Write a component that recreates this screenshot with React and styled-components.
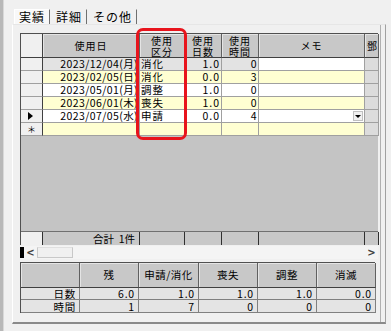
import React from "react"
import styled, { createGlobalStyle } from "styled-components"

const GlobalStyle = createGlobalStyle`
  html, body { margin: 0; padding: 0; background: #f0f0f0; }
  body { font-family: "Noto Sans CJK JP", "Liberation Sans", sans-serif; font-size: 11px; color: #000; }
`

const rows = [
  { date: "2023/12/04(月)", kind: "消化", days: "1.0", hours: "0", tone: "gray" },
  { date: "2023/02/05(日)", kind: "消化", days: "0.0", hours: "3", tone: "yellow" },
  { date: "2023/05/01(月)", kind: "調整", days: "1.0", hours: "0", tone: "white" },
  { date: "2023/06/01(木)", kind: "喪失", days: "1.0", hours: "0", tone: "yellow" },
  { date: "2023/07/05(水)", kind: "申請", days: "0.0", hours: "4", tone: "white", current: true },
]

const summaryHead = ["", "残", "申請/消化", "喪失", "調整", "消滅"]
const summaryRows = [
  ["日数", "6.0", "1.0", "1.0", "1.0", "0.0"],
  ["時間", "1", "7", "0", "0", "0"],
]

const COLS = "22px 97px 45px 37px 37px 106px 14px"
const tones = { gray: "#e3e3e3", yellow: "#ffffd2", white: "#ffffff" }

function App() {
  return (
    <Screen>
      <GlobalStyle />
      <WindowEdge />
      <Body>
        <TabBar>
          <Tab $active>実績</Tab>
          <Tab>詳細</Tab>
          <Tab>その他</Tab>
        </TabBar>
        <Panel>
          <GridFrame>
            <GridRow $height={24}>
              <Corner />
              <HeadCell>使用日</HeadCell>
              <HeadCell>使用<br />区分</HeadCell>
              <HeadCell>使用<br />日数</HeadCell>
              <HeadCell>使用<br />時間</HeadCell>
              <HeadCell>メモ</HeadCell>
              <HeadCell $clip>鄧</HeadCell>
            </GridRow>
            {rows.map((r, i) => (
              <GridRow key={i} $height={13}>
                <RowHead>{r.current ? <Pointer /> : null}</RowHead>
                <Cell $bg={tones[r.tone]} $align="flex-end">{r.date}</Cell>
                <Cell $bg={tones[r.tone]} $spread>{r.kind}</Cell>
                <Cell $bg={tones[r.tone]} $align="flex-end" $spread>{r.days}</Cell>
                <Cell $bg={tones[r.tone]} $align="flex-end">{r.hours}</Cell>
                <Cell $bg={r.tone === "gray" ? "#fff" : tones[r.tone]} $align="flex-end">
                  {r.current ? <DropButton><Caret /></DropButton> : null}
                </Cell>
                <Cell $bg="#dcdcdc" />
              </GridRow>
            ))}
            <GridRow $height={13}>
              <RowHead>＊</RowHead>
              <Cell $bg="#ffffd2" />
              <Cell $bg="#ffffd2" />
              <Cell $bg="#ffffd2" />
              <Cell $bg="#ffffd2" />
              <Cell $bg="#ffffd2" />
              <Cell $bg="#dcdcdc" />
            </GridRow>
            <Filler />
            <GridRow $height={13}>
              <FootHead />
              <FootCell $align="flex-end">合計&nbsp;&nbsp;1件</FootCell>
              <FootCell />
              <FootCell />
              <FootCell />
              <FootCell />
              <FootCell />
            </GridRow>
          </GridFrame>
          <ScrollBar>
            <FocusMark />
            <Arrow>&lt;</Arrow>
            <Thumb />
            <Track />
            <Arrow>&gt;</Arrow>
          </ScrollBar>
          <Summary>
            {summaryHead.map((h, i) => (
              <SumHead key={i}>{h}</SumHead>
            ))}
            {summaryRows.map((r) =>
              r.map((v, j) => <SumCell key={r[0] + j}>{v}</SumCell>)
            )}
          </Summary>
        </Panel>
      </Body>
      <Highlight />
    </Screen>
  )
}

export default App

const Screen = styled.div`
  position: relative;
  width: 391px;
  height: 331px;
  display: flex;
  overflow: hidden;
  background: #f0f0f0;
`

const WindowEdge = styled.div`
  width: 3px;
  flex: none;
  background: #b8b8b8;
  border-right: 1px solid #d8d8d8;
`

const Body = styled.div`
  flex: 1;
  display: flex;
  flex-direction: column;
  padding: 7px 5px 7px 8px;
`

const TabBar = styled.div`
  display: flex;
  height: 17px;
  padding-left: 2px;
`

const Tab = styled.div`
  display: flex;
  align-items: center;
  padding: 0 4px;
  margin-right: 1px;
  font-size: 12px;
  line-height: 14px;
  letter-spacing: 1px;
  border-right: 1px solid #707070;
  background: ${(p) => (p.$active ? "#f8f8f8" : "transparent")};
  border-top: 1px solid ${(p) => (p.$active ? "#ffffff" : "transparent")};
  border-left: 1px solid ${(p) => (p.$active ? "#ffffff" : "transparent")};
  height: 14px;
  margin-top: 2px;
`

const Panel = styled.div`
  flex: 1;
  display: flex;
  flex-direction: column;
  border: 1px solid #a0a0a0;
  border-left-color: #ffffff;
  border-top-color: #e6e6e6;
  border-bottom: 2px solid #8a8a8a;
  padding: 8px 0 6px 7px;
  box-shadow: inset -4px 0 0 #f0f0f0, inset -5px 0 0 #b0b0b0;
`

const GridFrame = styled.div`
  width: 358px;
  height: 212px;
  display: flex;
  flex-direction: column;
  background: #c4c4c4;
  border-left: 1px solid #505050;
  border-top: 1px solid #505050;
  box-sizing: border-box;
`

const GridRow = styled.div`
  display: grid;
  grid-template-columns: ${COLS};
  height: ${(p) => p.$height}px;
  flex: none;
`

const Corner = styled.div`
  background: #f0f0f0;
  border-right: 1px solid #404040;
  border-bottom: 1px solid #404040;
`

const HeadCell = styled.div`
  display: flex;
  align-items: center;
  justify-content: ${(p) => (p.$clip ? "flex-start" : "center")};
  text-align: center;
  background: #c8c8c8;
  border-right: 1px solid #606060;
  border-bottom: 1px solid #404040;
  box-shadow: inset 1px 1px 0 #e4e4e4;
  font-size: 10px;
  line-height: 11px;
  overflow: ${(p) => (p.$clip ? "hidden" : "visible")};
  white-space: nowrap;
  letter-spacing: 1px;
  padding-left: ${(p) => (p.$clip ? "2px" : "0")};
`

const RowHead = styled.div`
  display: flex;
  align-items: center;
  justify-content: center;
  background: #f0f0f0;
  border-right: 1px solid #404040;
  border-bottom: 1px solid #a0a0a0;
  font-size: 9px;
  line-height: 9px;
  box-sizing: border-box;
`

const Pointer = styled.div`
  width: 0;
  height: 0;
  margin-left: -3px;
  border-top: 4px solid transparent;
  border-bottom: 4px solid transparent;
  border-left: 5px solid #000;
`

const Cell = styled.div`
  display: flex;
  align-items: center;
  justify-content: ${(p) => p.$align || "flex-start"};
  background: ${(p) => p.$bg};
  border-right: 1px solid #a0a0a0;
  border-bottom: 1px solid #a0a0a0;
  padding: 0 1px;
  font-size: 10.5px;
  line-height: 12px;
  letter-spacing: ${(p) => (p.$spread ? "1px" : "0.4px")};
  white-space: nowrap;
  box-sizing: border-box;
`

const DropButton = styled.div`
  width: 10px;
  height: 10px;
  display: flex;
  align-items: center;
  justify-content: center;
  background: #f0f0f0;
  border: 1px solid #c0c0c0;
  box-sizing: border-box;
`

const Caret = styled.div`
  width: 0;
  height: 0;
  border-left: 3px solid transparent;
  border-right: 3px solid transparent;
  border-top: 3px solid #000;
`

const Filler = styled.div`
  flex: 1;
  border-bottom: 1px solid #707070;
  background: #c4c4c4;
`

const FootHead = styled.div`
  background: #f0f0f0;
  border-right: 1px solid #303030;
`

const FootCell = styled.div`
  display: flex;
  align-items: center;
  justify-content: ${(p) => p.$align || "flex-start"};
  padding-right: 4px;
  background: #c8c8c8;
  border-right: 1px solid #303030;
  font-size: 10.5px;
  line-height: 12px;
  white-space: nowrap;
`

const ScrollBar = styled.div`
  width: 358px;
  height: 13px;
  margin-top: 1px;
  display: flex;
  align-items: center;
  background: #f4f4f4;
`

const FocusMark = styled.div`
  width: 4px;
  height: 11px;
  background: #000;
`

const Arrow = styled.div`
  width: 13px;
  text-align: center;
  font-size: 10px;
  line-height: 11px;
  font-weight: bold;
  font-family: "DejaVu Sans", sans-serif;
  color: #404040;
`

const Thumb = styled.div`
  width: 36px;
  height: 11px;
  box-sizing: border-box;
  background: #f0f0f0;
  border: 1px solid #c8c8c8;
  border-top-color: #e0e0e0;
`

const Track = styled.div`
  flex: 1;
`

const Summary = styled.div`
  margin-top: 3px;
  width: 355px;
  display: grid;
  grid-template-columns: 59px 59px 60px 59px 59px 59px;
  grid-template-rows: 25px 12px 13px;
  border-left: 1px solid #505050;
  border-top: 1px solid #505050;
  box-sizing: border-box;
`

const SumHead = styled.div`
  display: flex;
  align-items: center;
  justify-content: center;
  background: #c8c8c8;
  border-right: 1px solid #606060;
  border-bottom: 1px solid #404040;
  box-shadow: inset 1px 1px 0 #e4e4e4;
  font-size: 10.5px;
  line-height: 12px;
  letter-spacing: 0.5px;
`

const SumCell = styled.div`
  display: flex;
  align-items: center;
  justify-content: flex-end;
  padding-right: 3px;
  background: #e4e4e4;
  border-right: 1px solid #808080;
  border-bottom: 1px solid #808080;
  font-size: 10.5px;
  line-height: 11px;
  letter-spacing: 0.8px;
`

const Highlight = styled.div`
  position: absolute;
  left: 136px;
  top: 28px;
  width: 51px;
  height: 112px;
  box-sizing: border-box;
  border: 3px solid #e8141c;
  border-radius: 7px;
  pointer-events: none;
`
